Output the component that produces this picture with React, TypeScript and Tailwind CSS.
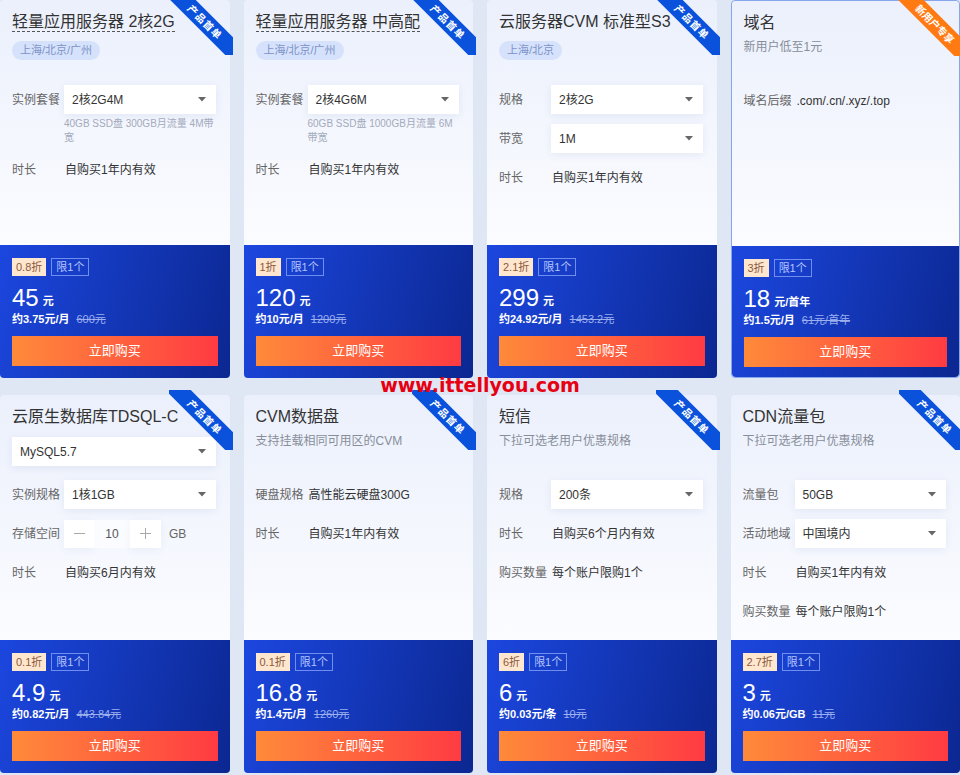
import React from 'react';

type Field = {
  label: string;
  kind: 'select' | 'text' | 'stepper';
  value: string;
  note?: string;
};

type Product = {
  title: string;
  underline?: boolean;
  tag?: string;
  subtitle?: string;
  topSelect?: string;
  fields: Field[];
  ribbon: 'blue' | 'orange';
  highlight?: boolean;
  discount: string;
  price: string;
  unit: string;
  per: string;
  old: string;
};

const products: Product[] = [
  {
    title: '轻量应用服务器 2核2G',
    underline: true,
    tag: '上海/北京/广州',
    fields: [
      { label: '实例套餐', kind: 'select', value: '2核2G4M', note: '40GB SSD盘 300GB月流量 4M带宽' },
      { label: '时长', kind: 'text', value: '自购买1年内有效' },
    ],
    ribbon: 'blue',
    discount: '0.8折',
    price: '45',
    unit: '元',
    per: '约3.75元/月',
    old: '600元',
  },
  {
    title: '轻量应用服务器 中高配',
    underline: true,
    tag: '上海/北京/广州',
    fields: [
      { label: '实例套餐', kind: 'select', value: '2核4G6M', note: '60GB SSD盘 1000GB月流量 6M带宽' },
      { label: '时长', kind: 'text', value: '自购买1年内有效' },
    ],
    ribbon: 'blue',
    discount: '1折',
    price: '120',
    unit: '元',
    per: '约10元/月',
    old: '1200元',
  },
  {
    title: '云服务器CVM 标准型S3',
    tag: '上海/北京',
    fields: [
      { label: '规格', kind: 'select', value: '2核2G' },
      { label: '带宽', kind: 'select', value: '1M' },
      { label: '时长', kind: 'text', value: '自购买1年内有效' },
    ],
    ribbon: 'blue',
    discount: '2.1折',
    price: '299',
    unit: '元',
    per: '约24.92元/月',
    old: '1453.2元',
  },
  {
    title: '域名',
    subtitle: '新用户低至1元',
    fields: [{ label: '域名后缀', kind: 'text', value: '.com/.cn/.xyz/.top' }],
    ribbon: 'orange',
    highlight: true,
    discount: '3折',
    price: '18',
    unit: '元/首年',
    per: '约1.5元/月',
    old: '61元/首年',
  },
  {
    title: '云原生数据库TDSQL-C',
    topSelect: 'MySQL5.7',
    fields: [
      { label: '实例规格', kind: 'select', value: '1核1GB' },
      { label: '存储空间', kind: 'stepper', value: '10' },
      { label: '时长', kind: 'text', value: '自购买6月内有效' },
    ],
    ribbon: 'blue',
    discount: '0.1折',
    price: '4.9',
    unit: '元',
    per: '约0.82元/月',
    old: '443.84元',
  },
  {
    title: 'CVM数据盘',
    subtitle: '支持挂载相同可用区的CVM',
    fields: [
      { label: '硬盘规格', kind: 'text', value: '高性能云硬盘300G' },
      { label: '时长', kind: 'text', value: '自购买1年内有效' },
    ],
    ribbon: 'blue',
    discount: '0.1折',
    price: '16.8',
    unit: '元',
    per: '约1.4元/月',
    old: '1260元',
  },
  {
    title: '短信',
    subtitle: '下拉可选老用户优惠规格',
    fields: [
      { label: '规格', kind: 'select', value: '200条' },
      { label: '时长', kind: 'text', value: '自购买6个月内有效' },
      { label: '购买数量', kind: 'text', value: '每个账户限购1个' },
    ],
    ribbon: 'blue',
    discount: '6折',
    price: '6',
    unit: '元',
    per: '约0.03元/条',
    old: '10元',
  },
  {
    title: 'CDN流量包',
    subtitle: '下拉可选老用户优惠规格',
    fields: [
      { label: '流量包', kind: 'select', value: '50GB' },
      { label: '活动地域', kind: 'select', value: '中国境内' },
      { label: '时长', kind: 'text', value: '自购买1年内有效' },
      { label: '购买数量', kind: 'text', value: '每个账户限购1个' },
    ],
    ribbon: 'blue',
    discount: '2.7折',
    price: '3',
    unit: '元',
    per: '约0.06元/GB',
    old: '11元',
  },
];

const SelectBox = ({ value }: { value: string }) => (
  <div className="flex-1 h-[29px] bg-white flex items-center justify-between pl-[8px] pr-[10px] shadow-[0_2px_8px_rgba(30,60,140,0.08)]">
    <span className="text-[12px] text-[#333]">{value}</span>
    {/* 下拉三角 */}
    <svg width="8" height="5" viewBox="0 0 8 5">
      <path d="M0 0 L8 0 L4 4.5 Z" fill="#666" />
    </svg>
  </div>
);

const Stepper = ({ value }: { value: string }) => (
  <div className="flex items-center">
    <div className="w-[30px] h-[28px] bg-white flex items-center justify-center shadow-[0_2px_8px_rgba(30,60,140,0.06)]">
      <svg width="11" height="11" viewBox="0 0 11 11">
        <path d="M0 5.5 H11" stroke="#aaa" strokeWidth="1" />
      </svg>
    </div>
    <div className="w-[36px] h-[28px] bg-[#fbfcff] flex items-center justify-center text-[12px] text-[#555]">{value}</div>
    <div className="w-[31px] h-[28px] bg-white flex items-center justify-center shadow-[0_2px_8px_rgba(30,60,140,0.06)]">
      <svg width="11" height="11" viewBox="0 0 11 11">
        <path d="M0 5.5 H11 M5.5 0 V11" stroke="#aaa" strokeWidth="1" />
      </svg>
    </div>
    <span className="ml-[8px] text-[12px] text-[#666]">GB</span>
  </div>
);

const Ribbon = ({ color }: { color: 'blue' | 'orange' }) => {
  const isBlue = color === 'blue';
  return (
    <div className="absolute -top-[5px] -right-[3px] w-[64px] h-[60px] overflow-hidden pointer-events-none">
      <div
        className={
          isBlue
            ? 'absolute left-[-12px] top-[18px] w-[96px] h-[18px] rotate-45 bg-[#0a52dc] flex items-center justify-center text-white text-[10px] font-bold tracking-[1px]'
            : 'absolute left-[-13px] top-[19px] w-[100px] h-[18px] rotate-45 bg-[#ff7a12] flex items-center justify-center text-white text-[10px] font-bold'
        }
      >
        {isBlue ? '产品首单' : '新用户专享'}
      </div>
    </div>
  );
};

const FieldRow = ({ field }: { field: Field }) => (
  <div className="flex flex-col">
    <div className="flex items-center h-[29px]">
      <span className="w-[52px] shrink-0 text-[12px] text-[#666] whitespace-nowrap">{field.label}</span>
      {field.kind === 'select' && <SelectBox value={field.value} />}
      {field.kind === 'stepper' && <Stepper value={field.value} />}
      {field.kind === 'text' && <span className="text-[12px] text-[#333] ml-[1px]">{field.value}</span>}
    </div>
    {field.note && (
      <p className="ml-[52px] mt-[3px] text-[10px] leading-[14px] text-[#a3aabb] break-all">{field.note}</p>
    )}
  </div>
);

const ProductCard = ({ p }: { p: Product }) => (
  <div
    className={
      p.highlight
        ? 'relative h-[378px] rounded-[4px] flex flex-col border border-[#86a6ec]'
        : 'relative h-[378px] rounded-[4px] flex flex-col'
    }
  >
    {/* 上半部分 */}
    <div className="h-[245px] shrink-0 rounded-t-[4px] bg-[linear-gradient(180deg,#ebf0fc,#fbfcff)] pl-[12px] pr-[14px]">
      <div className="h-[85px] pt-[11px]">
        <div className="leading-[22px]">
          <span
            className={
              p.underline
                ? 'text-[16px] text-[#333] border-b border-dashed border-[#555] pb-[1px]'
                : 'text-[16px] text-[#333]'
            }
          >
            {p.title}
          </span>
        </div>
        {p.tag && (
          <div className="mt-[8px] inline-flex h-[19px] items-center rounded-full bg-[#d6e2fb] px-[8px] text-[11px] text-[#7c93c8]">
            {p.tag}
          </div>
        )}
        {p.subtitle && <p className="mt-[5px] text-[12px] leading-[16px] text-[#888e99]">{p.subtitle}</p>}
        {p.topSelect && (
          <div className="mt-[9px] flex">
            <SelectBox value={p.topSelect} />
          </div>
        )}
      </div>
      <div className="flex flex-col gap-[10px]">
        {p.fields.map((f) => (
          <FieldRow key={f.label} field={f} />
        ))}
      </div>
    </div>

    {/* 价格部分 */}
    <div className="flex-1 rounded-b-[4px] bg-[linear-gradient(105deg,#1c47df,#0b2791)] px-[12px] pt-[13px]">
      <div className="flex gap-[5px]">
        <span className="h-[18px] px-[4px] flex items-center bg-[#ffe6cf] text-[11px] text-[#8b5a3c]">{p.discount}</span>
        <span className="h-[18px] px-[4px] flex items-center border border-[#6f8ef0] text-[11px] text-[#b3c4ff]">限1个</span>
      </div>
      <div className="mt-[8px] h-[26px] flex items-end">
        <span className="text-[24px] leading-[24px] text-white">{p.price}</span>
        <span className="ml-[4px] mb-[1px] text-[11px] font-bold text-white">{p.unit}</span>
      </div>
      <div className="mt-[2px] h-[14px] flex items-center text-[11px]">
        <span className="font-bold text-white">{p.per}</span>
        <span className="ml-[7px] line-through text-[#9db0ee]">{p.old}</span>
      </div>
      <button className="mt-[10px] w-full h-[30px] bg-[linear-gradient(90deg,#ff8a3a,#ff3b42)] text-white text-[13px]">
        立即购买
      </button>
    </div>

    <Ribbon color={p.ribbon} />
  </div>
);

export default function App() {
  return (
    <div
      className="relative w-[960px] h-[775px] overflow-hidden bg-[#dfe6f4]"
      style={{ fontFamily: '"Liberation Sans", "Noto Sans CJK SC", sans-serif' }}
    >
      <div className="grid grid-cols-4 gap-x-[14px] gap-y-[17px]">
        {products.map((p) => (
          <ProductCard key={p.title} p={p} />
        ))}
      </div>

      {/* 水印 */}
      <div
        className="absolute left-0 right-0 top-[374px] text-center text-[19px] font-bold text-[#e60012] leading-[22px]"
        style={{ fontFamily: '"DejaVu Sans", sans-serif' }}
      >
        www.ittellyou.com
      </div>
    </div>
  );
}
